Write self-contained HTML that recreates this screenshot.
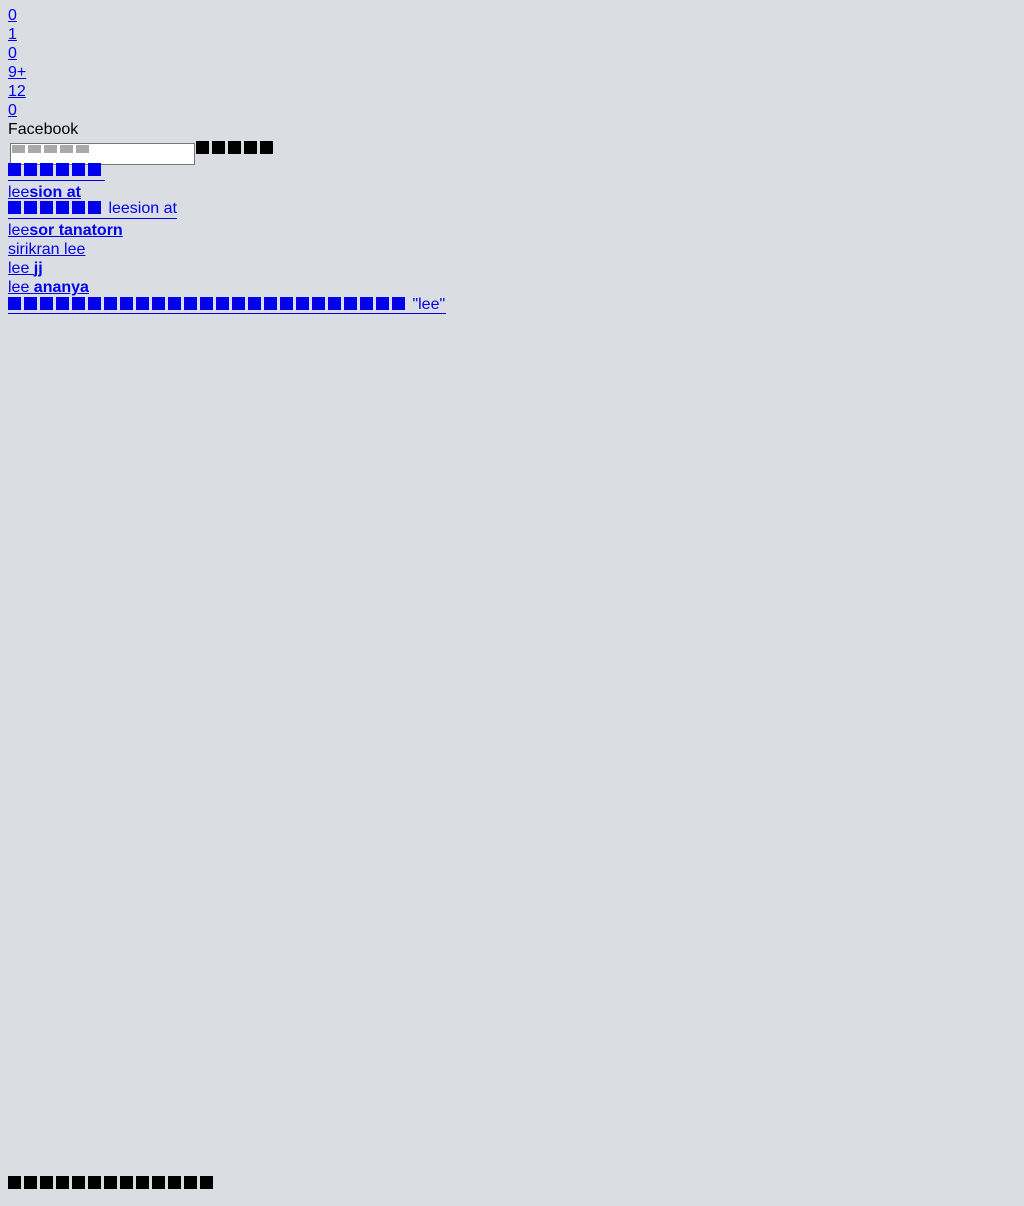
<!DOCTYPE html>
<html><head><meta charset="utf-8"><style>
html,body{margin:0;padding:0}
body{background:#dadde1;width:1024px;height:1206px;position:relative;font-family:"Liberation Sans",sans-serif;font-size:16px;overflow:hidden}
.l{position:absolute;left:8px;height:19px;line-height:19px;white-space:nowrap}
a{color:#0000ee;text-decoration:underline}
.b{display:inline-block;width:13px;height:13px;background:currentColor;margin-right:3px;vertical-align:-1px}
.bk{color:#000}
.inp{position:absolute;left:10px;top:143px;width:183px;height:20px;border:1px solid #767676;background:#fff}
.g{position:absolute;top:1px;width:13px;height:8px;background:#a9a9a9}
.u{position:absolute;height:1px;background:#0000ee}
</style></head><body>
<div class="l" style="top:6px"><a href="#">0</a></div>
<div class="l" style="top:25px"><a href="#">1</a></div>
<div class="l" style="top:44px"><a href="#">0</a></div>
<div class="l" style="top:63px"><a href="#">9+</a></div>
<div class="l" style="top:82px"><a href="#">12</a></div>
<div class="l" style="top:101px"><a href="#">0</a></div>
<div class="l" style="top:120px">Facebook</div>
<div class="inp"><span class="g" style="left:1px"></span><span class="g" style="left:17px"></span><span class="g" style="left:33px"></span><span class="g" style="left:49px"></span><span class="g" style="left:65px"></span></div>
<div class="l bk" style="top:139px;left:196px"><span class="b"></span><span class="b"></span><span class="b"></span><span class="b"></span><span class="b"></span></div>
<div class="l" style="top:161px"><a href="#"><span class="b"></span><span class="b"></span><span class="b"></span><span class="b"></span><span class="b"></span><span class="b"></span> </a></div>
<div class="u" style="top:180px;left:8px;width:97px"></div>
<div class="l" style="top:183px"><a href="#">lee<b>sion at</b></a></div>
<div class="l" style="top:199px"><a href="#" style="text-decoration:none"><span class="b"></span><span class="b"></span><span class="b"></span><span class="b"></span><span class="b"></span><span class="b"></span> leesion at</a></div>
<div class="u" style="top:218px;left:8px;width:169px"></div>
<div class="l" style="top:221px"><a href="#">lee<b>sor tanatorn</b></a></div>
<div class="l" style="top:240px"><a href="#">sirikran lee</a></div>
<div class="l" style="top:259px"><a href="#">lee <b>jj</b></a></div>
<div class="l" style="top:278px"><a href="#">lee <b>ananya</b></a></div>
<div class="l" style="top:295px"><a href="#" style="text-decoration:none"><span class="b"></span><span class="b"></span><span class="b"></span><span class="b"></span><span class="b"></span><span class="b"></span><span class="b"></span><span class="b"></span><span class="b"></span><span class="b"></span><span class="b"></span><span class="b"></span><span class="b"></span><span class="b"></span><span class="b"></span><span class="b"></span><span class="b"></span><span class="b"></span><span class="b"></span><span class="b"></span><span class="b"></span><span class="b"></span><span class="b"></span><span class="b"></span><span class="b"></span> "lee"</a></div>
<div class="u" style="top:313px;left:8px;width:438px"></div>
<div class="l bk" style="top:1174px"><span class="b"></span><span class="b"></span><span class="b"></span><span class="b"></span><span class="b"></span><span class="b"></span><span class="b"></span><span class="b"></span><span class="b"></span><span class="b"></span><span class="b"></span><span class="b"></span><span class="b"></span></div>
</body></html>
